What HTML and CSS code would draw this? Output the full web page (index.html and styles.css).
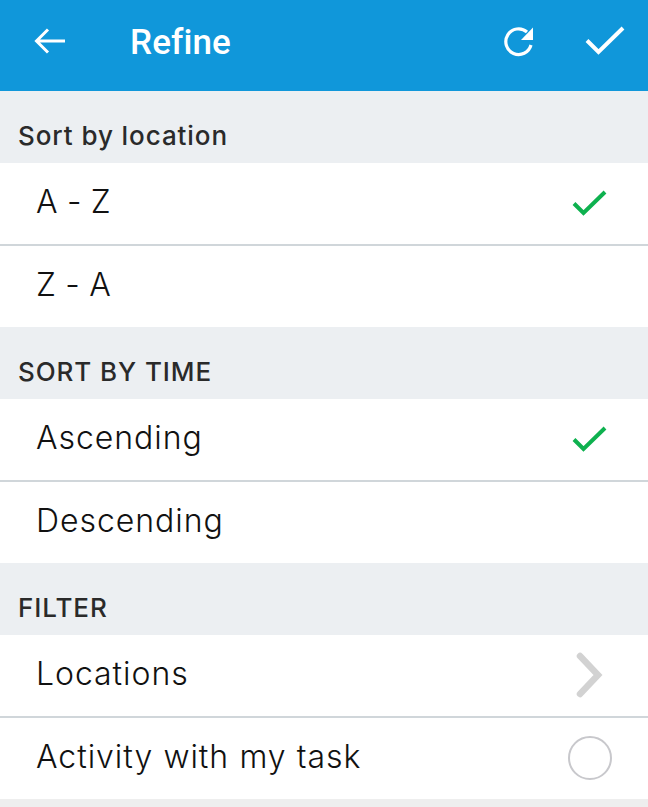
FILE: index.html
```html
<!DOCTYPE html>
<html>
<head>
  <title>Refine</title>
  <link rel="stylesheet" href="styles.css">
</head>
<body>
  <header class="app-bar">
    <button class="bar-btn back-btn" title="Back">
      <svg width="34" height="30" viewBox="0 0 34 30"><path d="M32 15H4M15 3.500L3.500 15 15 26.500" fill="none" stroke="#fff" stroke-width="3"/></svg>
    </button>
    <h1 class="bar-title">Refine</h1>
    <button class="bar-btn reset-btn" title="Reset">
      <svg width="32" height="32" viewBox="0 0 32 32"><path d="M28 20A12.800 12.800 0 1 1 24 7" fill="none" stroke="#fff" stroke-width="3.200"/><path d="M30 2.500V15H18z" fill="#fff"/></svg>
    </button>
    <button class="bar-btn done-btn" title="Done">
      <svg width="40" height="30" viewBox="0 0 40 30"><path d="M2 14.500L13.500 26 38 2" fill="none" stroke="#fff" stroke-width="4"/></svg>
    </button>
  </header>

  <h2 class="section-title">Sort by location</h2>
  <div class="option-list">
    <div class="option">
      <span class="option-label short">A - Z</span>
      <svg class="tick" width="36" height="28" viewBox="0 0 36 28"><path d="M2 13.500L11.500 23 33 2" fill="none" stroke="#0eb14f" stroke-width="4"/></svg>
    </div>
    <div class="option">
      <span class="option-label short">Z - A</span>
    </div>
  </div>

  <h2 class="section-title">SORT BY TIME</h2>
  <div class="option-list">
    <div class="option">
      <span class="option-label">Ascending</span>
      <svg class="tick" width="36" height="28" viewBox="0 0 36 28"><path d="M2 13.500L11.500 23 33 2" fill="none" stroke="#0eb14f" stroke-width="4"/></svg>
    </div>
    <div class="option">
      <span class="option-label">Descending</span>
    </div>
  </div>

  <h2 class="section-title">FILTER</h2>
  <div class="option-list">
    <div class="option">
      <span class="option-label">Locations</span>
      <svg class="chevron" width="30" height="46" viewBox="0 0 30 46"><path d="M7 4L25 23 7 42" fill="none" stroke="#d2d2d2" stroke-width="6.500" stroke-linecap="round"/></svg>
    </div>
    <div class="option">
      <span class="option-label">Activity with my task</span>
      <span class="radio"></span>
    </div>
  </div>
</body>
</html>
```

FILE: styles.css
```css
* {
  margin: 0;
  padding: 0;
  box-sizing: border-box;
}

body {
  background: #eeeeee;
  font-family: Inter, "Open Sans", sans-serif;
  color: #111;
  overflow: hidden;
}

.app-bar {
  height: 91px;
  background: #1097da;
  display: flex;
  align-items: center;
  padding: 0 23px 10px 33px;
}

.bar-btn {
  background: none;
  border: none;
  display: flex;
  cursor: pointer;
}

.bar-title {
  flex: 1;
  margin-left: 63px;
  margin-top: 3px;
  font-family: Roboto, sans-serif;
  font-size: 35px;
  font-weight: 500;
  letter-spacing: 0.1px;
  color: #fff;
}

.done-btn {
  margin-left: 50px;
}

.section-title {
  height: 72px;
  background: #eceff2;
  padding: 30px 0 0 18px;
  font-size: 26px;
  line-height: 30px;
  font-weight: 500;
  letter-spacing: 0.92px;
  color: #2a2a2a;
}

.option-list {
  background: #fff;
}

.option {
  height: 82px;
  display: flex;
  align-items: center;
  justify-content: space-between;
  padding: 0 36px 6px 36px;
}

.option + .option {
  border-top: 2px solid #d0d6da;
  margin-top: -1px;
  height: 83px;
  padding-bottom: 5px;
}

.option-label {
  font-size: 32px;
  font-weight: 300;
  letter-spacing: 0.95px;
  word-spacing: 0.3px;
}

.option-label.short {
  word-spacing: -1.5px;
}

.tick {
  margin-top: 6px;
  margin-right: 4px;
}

.chevron {
  margin-top: 4px;
  margin-right: 9px;
}

.radio {
  width: 44px;
  height: 44px;
  border: 2px solid #c8c8cc;
  border-radius: 50%;
  margin-top: 3px;
}
```
